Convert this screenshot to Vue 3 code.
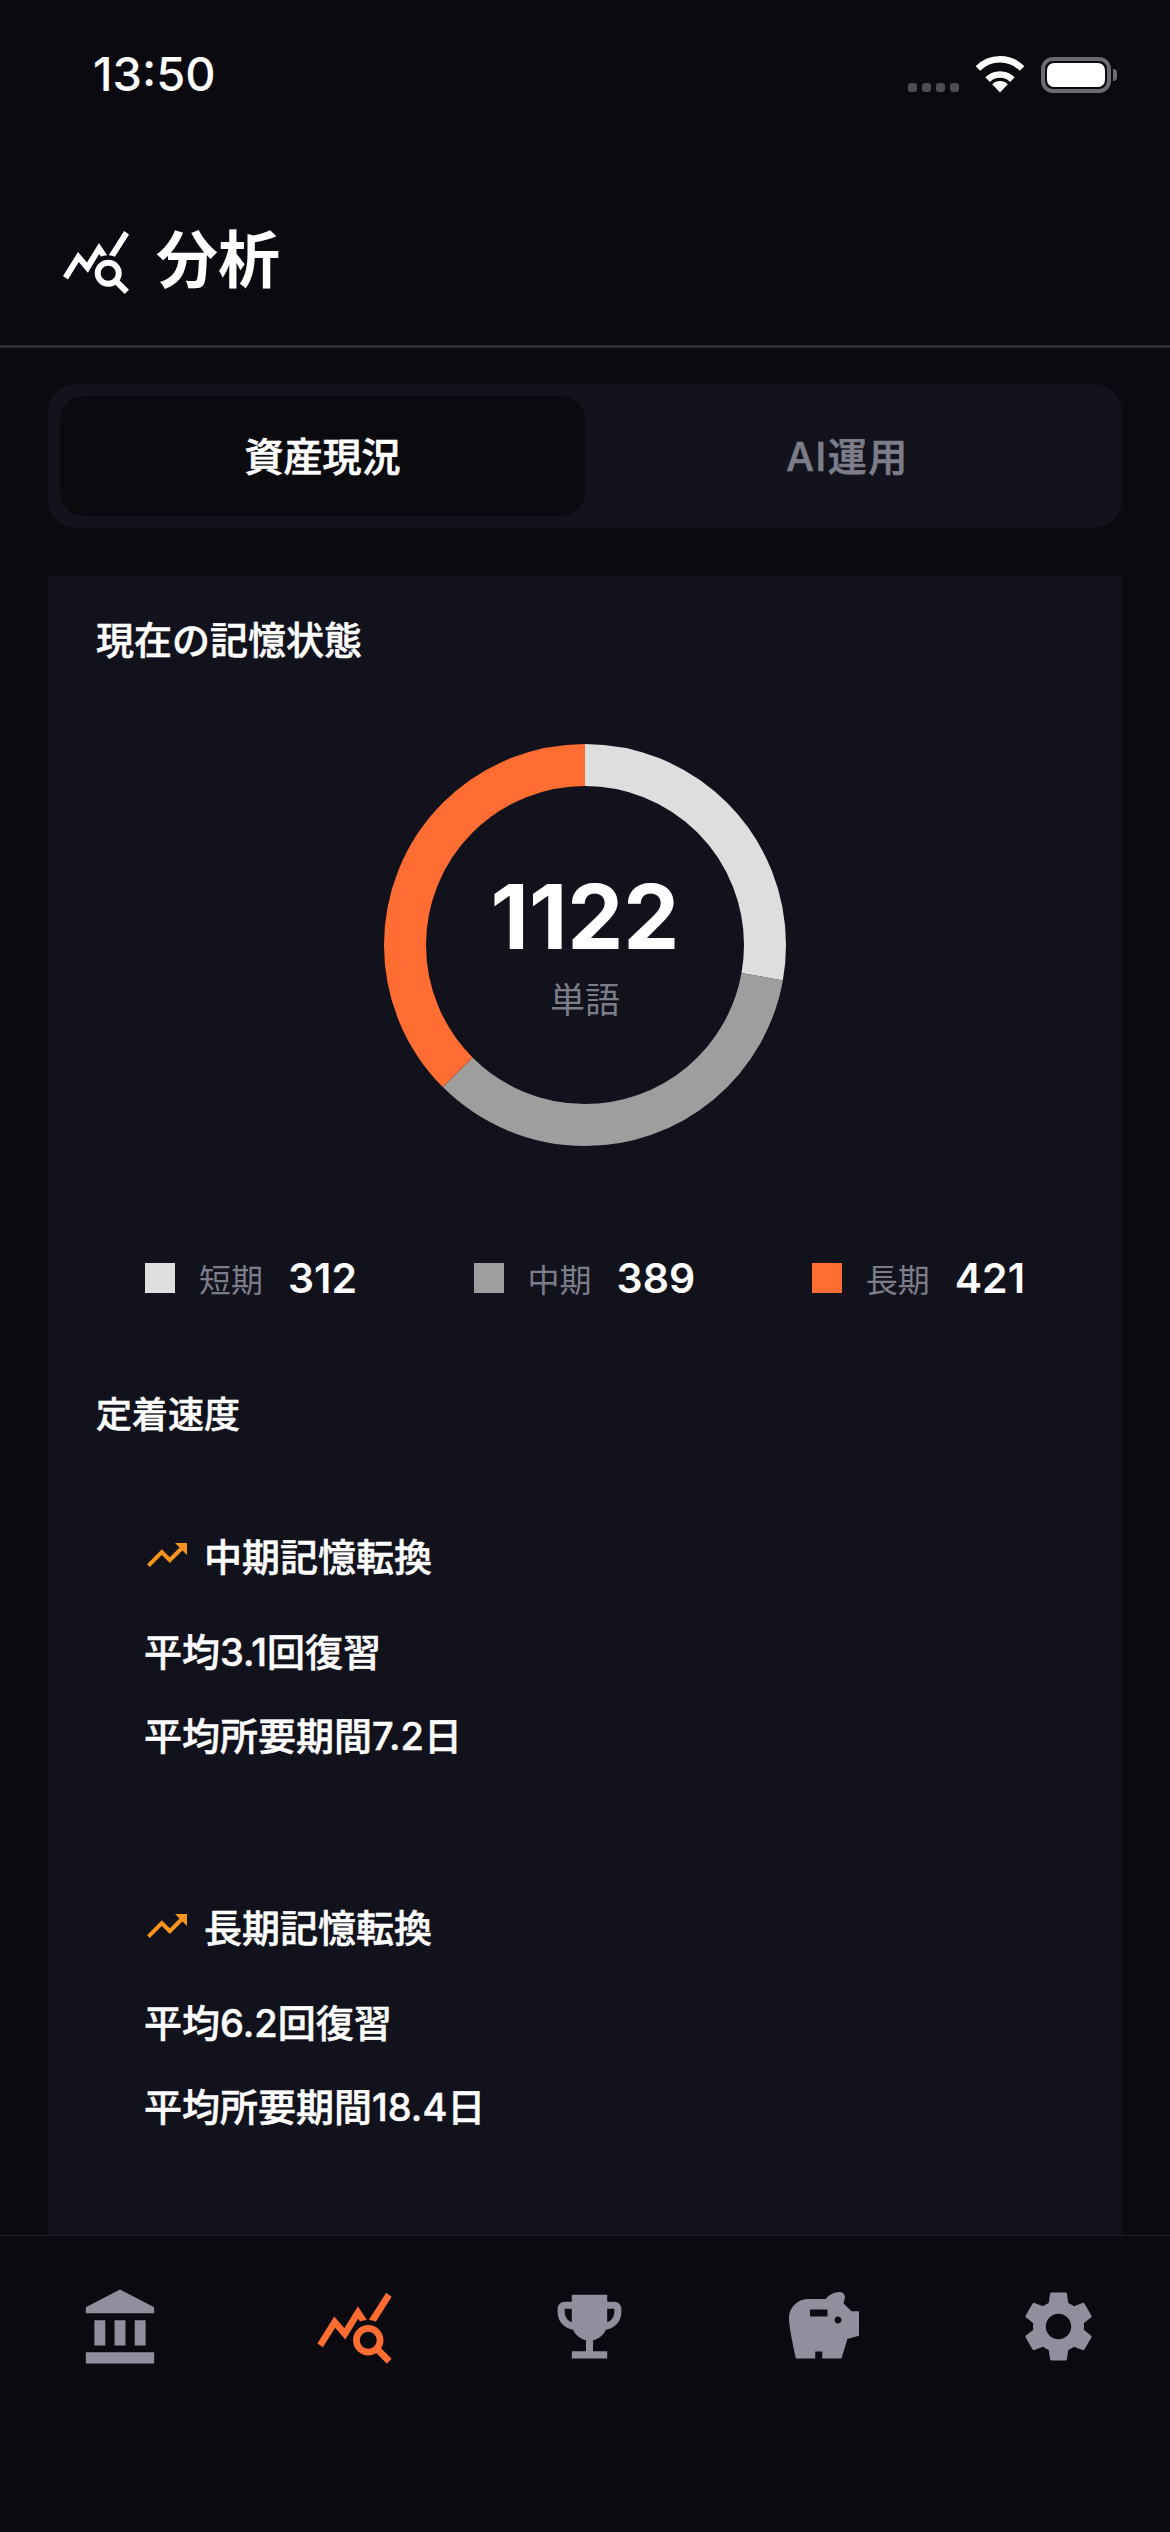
<script setup>
import { computed } from 'vue'

// 記憶状態
const stats = [
  { key: 'short', label: '短期', value: 312, color: '#dedede' },
  { key: 'mid', label: '中期', value: 389, color: '#9e9e9e' },
  { key: 'long', label: '長期', value: 421, color: '#ff6d33' }
]

const total = computed(() => stats.reduce((sum, s) => sum + s.value, 0))

const RADIUS = 180
const CIRCUMFERENCE = 2 * Math.PI * RADIUS

const segments = computed(() => {
  let offset = 0
  return stats.map((s) => {
    const len = (s.value / total.value) * CIRCUMFERENCE
    const seg = { key: s.key, color: s.color, dash: `${len} ${CIRCUMFERENCE - len}`, offset: -offset }
    offset += len
    return seg
  })
})

// 定着速度
const speeds = [
  { title: '中期記憶転換', reviews: '平均3.1回復習', days: '平均所要期間7.2日' },
  { title: '長期記憶転換', reviews: '平均6.2回復習', days: '平均所要期間18.4日' }
]

const queryStats = 'M19.88,18.47c0.44-0.7,0.7-1.51,0.7-2.39c0-2.49-2.01-4.5-4.5-4.5s-4.5,2.01-4.5,4.5s2.01,4.5,4.49,4.5c0.88,0,1.7-0.26,2.39-0.7L21.58,23L23,21.58L19.88,18.47z M16.08,18.58c-1.38,0-2.5-1.12-2.5-2.5c0-1.38,1.12-2.5,2.5-2.5s2.5,1.12,2.5,2.5C18.58,17.46,17.46,18.58,16.08,18.58z M15.72,10.08c-0.74,0.02-1.45,0.18-2.1,0.45l-0.55-0.83l-3.8,6.18l-3.01-3.52l-3.63,5.81L1,17l5-8l3,3.5L13,6C13,6,15.72,10.08,15.72,10.08z M18.31,10.58c-0.64-0.28-1.33-0.45-2.05-0.49c0,0,5.12-8.09,5.12-8.09L23,3.18L18.31,10.58z'

// 下部ナビ
const navItems = [
  { key: 'bank', size: 82, path: 'M4.5 10h3.2v7.4H4.5zM10.4 10h3.2v7.4h-3.2zM2 19.4h20v3.3H2zM16.3 10h3.2v7.4h-3.2zM12 1L2 6.2V8h20V6.2z' },
  { key: 'analysis', size: 81, active: true, path: queryStats },
  { key: 'trophy', size: 85, path: 'M19 5h-2V3H7v2H5c-1.1 0-2 .9-2 2v1c0 2.55 1.92 4.63 4.39 4.94.63 1.5 1.98 2.63 3.61 2.96V19H7v2h10v-2h-4v-3.1c1.63-.33 2.98-1.46 3.61-2.96C19.08 12.63 21 10.55 21 8V7c0-1.1-.9-2-2-2zM5 8V7h2v3.82C5.84 10.4 5 9.3 5 8zm14 0c0 1.3-.84 2.4-2 2.82V7h2v1z' },
  { key: 'piggy', size: 84, path: 'M19.83,7.5l-2.27-2.27c0.07-0.42,0.18-0.81,0.32-1.15C17.96,3.9,18,3.71,18,3.5C18,2.67,17.33,2,16.5,2c-1.64,0-3.09,0.79-4,2l-5,0C4.46,4,2,6.46,2,9.5S4,21,4,21l5.5,0l0-2l2,0l0,2l5.5,0l1.68-5.59L22,14.47V7.5H19.83z M13,9H8V7h5V9z M16,11c-0.55,0-1-0.45-1-1c0-0.55,0.45-1,1-1s1,0.45,1,1C17,10.55,16.55,11,16,11z' },
  { key: 'settings', size: 85, path: 'M19.14 12.94c.04-.3.06-.61.06-.94 0-.32-.02-.64-.07-.94l2.03-1.58c.18-.14.23-.41.12-.61l-1.92-3.32c-.12-.22-.37-.29-.59-.22l-2.39.96c-.5-.38-1.03-.7-1.62-.94l-.36-2.54c-.04-.24-.24-.41-.48-.41h-3.84c-.24 0-.43.17-.47.41l-.36 2.54c-.59.24-1.13.57-1.62.94l-2.39-.96c-.22-.08-.47 0-.59.22L2.74 8.87c-.12.21-.08.47.12.61l2.03 1.58c-.05.3-.09.63-.09.94s.02.64.07.94l-2.03 1.58c-.18.14-.23.41-.12.61l1.92 3.32c.12.22.37.29.59.22l2.39-.96c.5.38 1.03.7 1.62.94l.36 2.54c.05.24.24.41.48.41h3.84c.24 0 .44-.17.47-.41l.36-2.54c.59-.24 1.13-.56 1.62-.94l2.39.96c.22.08.47 0 .59-.22l1.92-3.32c.12-.22.07-.47-.12-.61l-2.01-1.58zM12 15.6c-1.98 0-3.6-1.62-3.6-3.6s1.62-3.6 3.6-3.6 3.6 1.62 3.6 3.6-1.62 3.6-3.6 3.6z' }
]
</script>

<template>
  <div class="screen">
    <!-- ステータスバー -->
    <div class="status-bar">
      <span class="time">13:50</span>
      <div class="status-icons">
        <div class="signal">
          <i v-for="n in 4" :key="n"></i>
        </div>
        <svg class="wifi" width="50" height="38" viewBox="-1 0 50 38">
          <path d="M2 13.5A31 31 0 0 1 46 13.5" fill="none" stroke="#fff" stroke-width="6.5" />
          <path d="M11.6 24.6A17.5 17.5 0 0 1 36.4 24.6" fill="none" stroke="#fff" stroke-width="6.5" />
          <path d="M24 37.5L16.2 29.2A11 11 0 0 1 31.8 29.2Z" fill="#fff" />
        </svg>
        <div class="battery"><div class="battery-fill"></div></div>
      </div>
    </div>

    <!-- ヘッダー -->
    <header class="page-header">
      <svg class="title-icon" width="72" height="72" viewBox="0 0 24 24" fill="#fff">
        <path :d="queryStats" />
      </svg>
      <h1>分析</h1>
    </header>

    <main class="content">
      <!-- タブ -->
      <div class="tabs">
        <div class="tab active">資産現況</div>
        <div class="tab">AI運用</div>
      </div>

      <section class="card">
        <h2 class="section-title">現在の記憶状態</h2>

        <div class="donut">
          <svg width="402" height="402" viewBox="0 0 402 402">
            <circle
              v-for="seg in segments"
              :key="seg.key"
              cx="201"
              cy="201"
              :r="RADIUS"
              fill="none"
              stroke-width="42"
              :stroke="seg.color"
              :stroke-dasharray="seg.dash"
              :stroke-dashoffset="seg.offset"
              transform="rotate(-90 201 201)"
            />
          </svg>
          <div class="donut-center">
            <div class="donut-total">{{ total }}</div>
            <div class="donut-unit">単語</div>
          </div>
        </div>

        <div class="legend">
          <div v-for="s in stats" :key="s.key" class="legend-item">
            <span class="legend-swatch" :style="{ background: s.color }"></span>
            <span class="legend-label">{{ s.label }}</span>
            <span class="legend-value">{{ s.value }}</span>
          </div>
        </div>

        <h2 class="section-title speed-title">定着速度</h2>

        <div v-for="item in speeds" :key="item.title" class="speed-block">
          <div class="speed-head">
            <svg width="48" height="48" viewBox="0 0 24 24" fill="#f7941d">
              <path d="M16 6l2.29 2.29-4.88 4.88-4-4L2 16.59 3.41 18l6-6 4 4 6.3-6.29L22 12V6z" />
            </svg>
            <span>{{ item.title }}</span>
          </div>
          <p class="speed-line">{{ item.reviews }}</p>
          <p class="speed-line">{{ item.days }}</p>
        </div>
      </section>
    </main>

    <!-- 下部ナビ -->
    <nav class="bottom-nav">
      <div v-for="item in navItems" :key="item.key" class="nav-item" :class="{ active: item.active }">
        <svg :width="item.size" :height="item.size" viewBox="0 0 24 24" fill="currentColor">
          <path :d="item.path" />
        </svg>
      </div>
    </nav>
  </div>
</template>

<style>
html,
body {
  margin: 0;
  background: #0a0a10;
}
</style>

<style scoped>
.screen {
  width: 1170px;
  height: 2532px;
  display: flex;
  flex-direction: column;
  overflow: hidden;
  background: #0a0a10;
  color: #fff;
  font-family: Inter, "Noto Sans CJK JP", sans-serif;
}

/* ステータスバー */
.status-bar {
  height: 132px;
  flex-shrink: 0;
  box-sizing: border-box;
  padding: 46px 59px 0 93px;
  display: flex;
  justify-content: space-between;
  align-items: flex-start;
}

.time {
  font-size: 47px;
  font-weight: 500;
  line-height: 56px;
}

.status-icons {
  display: flex;
  align-items: flex-end;
  margin-top: 9px;
}

.signal {
  display: flex;
  gap: 5px;
  margin-bottom: 1px;
}

.signal i {
  width: 9px;
  height: 9px;
  border-radius: 3px;
  background: #4c4c53;
}

.wifi {
  margin-left: 16px;
}

.battery {
  position: relative;
  width: 70px;
  height: 36px;
  box-sizing: border-box;
  margin-left: 16px;
  border: 4px solid #6c6c70;
  border-radius: 12px;
  padding: 2px;
}

.battery::after {
  content: '';
  position: absolute;
  right: -10px;
  top: 8px;
  width: 4px;
  height: 12px;
  border-radius: 0 6px 6px 0;
  background: #6c6c70;
}

.battery-fill {
  height: 100%;
  background: #fff;
  border-radius: 7px;
}

/* ヘッダー */
.page-header {
  height: 216px;
  flex-shrink: 0;
  box-sizing: border-box;
  padding: 44px 0 0 60px;
  border-bottom: 3px solid #2d2d35;
  display: flex;
  align-items: center;
  gap: 24px;
}

.page-header h1 {
  margin: 0;
  font-size: 62px;
  font-weight: 700;
  line-height: 80px;
}

/* タブ */
.content {
  flex: 1;
  min-height: 0;
  display: flex;
  flex-direction: column;
  padding: 36px 48px 0;
}

.tabs {
  height: 144px;
  flex-shrink: 0;
  box-sizing: border-box;
  padding: 12px;
  display: grid;
  grid-template-columns: 1fr 1fr;
  background: #12131c;
  border-radius: 28px;
}

.tab {
  display: flex;
  align-items: center;
  justify-content: center;
  padding-bottom: 5px;
  border-radius: 24px;
  font-size: 39px;
  font-weight: 500;
  letter-spacing: 1.5px;
  color: #7d7d8a;
  -webkit-text-stroke: 0.7px currentColor;
}

.tab.active {
  background: #0a0a0f;
  color: #fff;
  letter-spacing: 0;
}

/* カード */
.card {
  flex: 1;
  min-height: 0;
  margin-top: 48px;
  padding: 41px 48px 0;
  background: #11121b;
}

.section-title {
  margin: 0;
  font-size: 38px;
  font-weight: 500;
  line-height: 46px;
  -webkit-text-stroke: 0.5px #fff;
}

.donut {
  position: relative;
  width: 402px;
  height: 402px;
  margin: 81px auto 0;
}

.donut svg {
  display: block;
}

.donut-center {
  position: absolute;
  inset: 0;
  display: flex;
  flex-direction: column;
  align-items: center;
  justify-content: center;
}

.donut-total {
  font-size: 89px;
  font-weight: 700;
  line-height: 100px;
}

.donut-unit {
  font-size: 35px;
  line-height: 46px;
  color: #7d7d8a;
  margin-top: 10px;
}

/* 凡例 */
.legend {
  display: flex;
  justify-content: space-between;
  margin-top: 111px;
  padding: 0 49px;
}

.legend-item {
  display: flex;
  align-items: center;
  height: 42px;
}

.legend-swatch {
  width: 30px;
  height: 30px;
  margin-right: 24px;
}

.legend-label {
  font-size: 32px;
  color: #7d7d8a;
  margin-right: 25px;
}

.legend-value {
  font-size: 41px;
  font-weight: 600;
}

.speed-title {
  margin-top: 93px;
  font-size: 36px;
}

/* 定着速度 */
.speed-block {
  padding-left: 48px;
  margin-top: 92px;
}

.speed-block + .speed-block {
  margin-top: 141px;
}

.speed-head {
  display: flex;
  align-items: center;
  height: 48px;
  gap: 13px;
  margin-bottom: 50px;
  font-size: 38px;
  font-weight: 500;
  -webkit-text-stroke: 0.5px #fff;
}

.speed-head svg {
  margin-left: -1px;
  margin-top: 2px;
}

.speed-line {
  margin: 36px 0 0;
  font-size: 38px;
  font-weight: 500;
  line-height: 48px;
  -webkit-text-stroke: 0.5px #fff;
}

/* 下部ナビ */
.bottom-nav {
  height: 297px;
  flex-shrink: 0;
  box-sizing: border-box;
  padding: 48px 0 0 3px;
  border-top: 1px solid #1d1f27;
  display: grid;
  grid-template-columns: repeat(5, 234.5px);
  align-items: start;
  background: #0a0a10;
}

.nav-item {
  display: flex;
  justify-content: center;
  height: 85px;
  align-items: center;
  color: #8f8f9e;
}

.nav-item.active {
  color: #ff6d33;
}
</style>
